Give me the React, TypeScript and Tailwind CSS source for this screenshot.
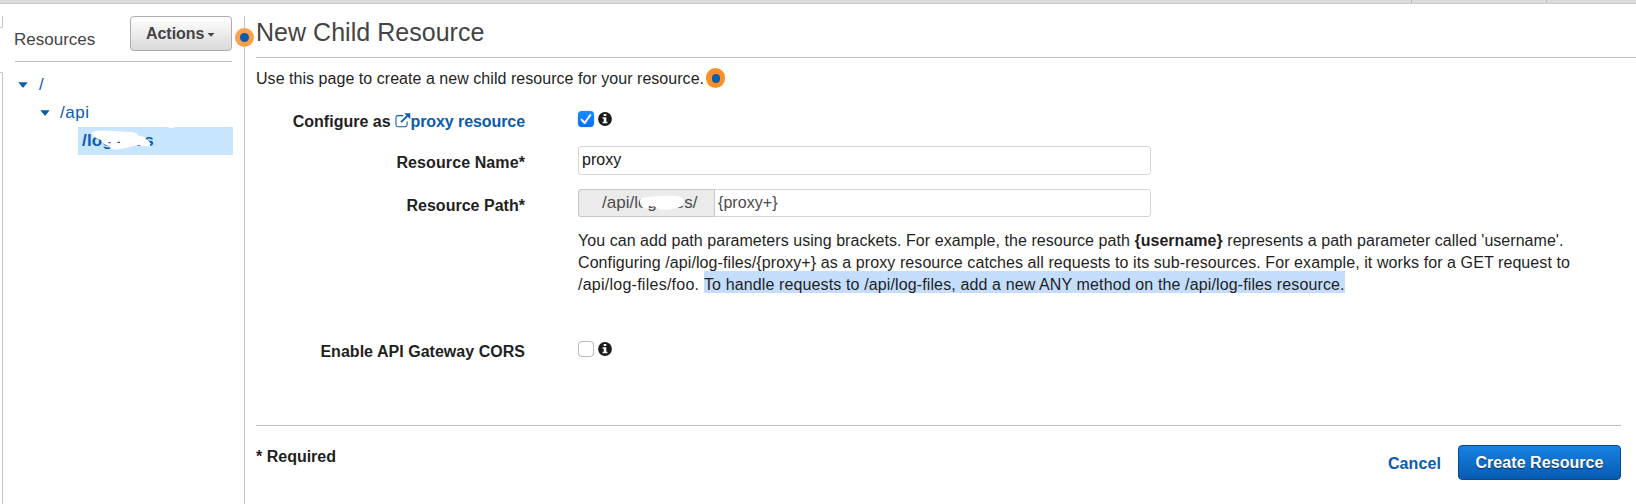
import type { ReactNode } from "react";

function Caret({ className = "" }: { className?: string }) {
  return (
    <svg className={className} width="10" height="6" viewBox="0 0 10 6">
      <path d="M0.3 0.3H9.7L5.6 5.3Q5 6 4.4 5.3Z" fill="#0a5cad" />
    </svg>
  );
}

function InfoIcon() {
  return (
    <svg className="ml-1 mt-[0.5px]" width="14" height="14" viewBox="0 0 14 14">
      <circle cx="7" cy="7" r="6.9" fill="#1c1c1c" />
      <path d="M5.7 2.1h2.6v1.8H5.7zM4.6 5.2h3.7v4.6h1.1v1.5H4.6V9.8h1.2V6.7H4.6z" fill="#fff" />
    </svg>
  );
}

function Checkbox({ checked = false }: { checked?: boolean }) {
  if (!checked) {
    return <span className="h-4 w-4 rounded-[4px] border border-[#bdbdbd] bg-white shadow-[0_0_1px_#0002]" />;
  }
  return (
    <span className="h-4 w-4 rounded-[4px] bg-gradient-to-b from-[#1a8bff] to-[#0670f5] shadow-[0_0_1px_#0670f5]">
      <svg width="16" height="16" viewBox="0 0 16 16">
        <path d="M3.6 8.6 6.7 12 12.3 4" fill="none" stroke="#fff" strokeWidth="2" strokeLinecap="round" strokeLinejoin="round" />
      </svg>
    </span>
  );
}

function Label({ children }: { children: ReactNode }) {
  return <div className="w-[269px] shrink-0 text-right font-bold">{children}</div>;
}

function ExternalIcon() {
  return (
    <svg className="inline-block align-[-1px]" width="15.5" height="15" viewBox="0 0 16 15" fill="none" stroke="#0a5cad">
      <path d="M8.5 2.5H3Q1 2.5 1 4.5V12Q1 14 3 14H10.5Q12.5 14 12.5 12V8.5" strokeWidth="1.1" />
      <path d="M6.3 9.2 13 2.5" strokeWidth="2" />
      <path d="M9.6 0H15.8V6.2Z" fill="#0a5cad" stroke="none" />
    </svg>
  );
}

export default function App() {
  return (
    <div className="flex h-[504px] w-[1636px] flex-col overflow-hidden bg-white font-['Liberation_Sans',Arial,sans-serif] text-[16px] leading-[22px] text-[#1f1f1f]">
      <div className="flex h-1 shrink-0 border-b border-[#cbcbcb] bg-[#dcdcdc]">
        <div className="w-[1412px] border-r border-[#bdbdbd]" />
        <div className="w-[135px] border-r border-[#bdbdbd]" />
      </div>
      <div className="flex min-h-0 flex-1 pt-3">
        <div className="flex w-[3px] shrink-0 flex-col">
          <div className="h-3 rounded-br-[2px] border-r border-b border-[#c4c4c4]" />
          <div className="mt-11 flex-1 rounded-tr-[2px] border-t border-r border-[#c4c4c4]" />
        </div>
        <aside className="flex w-[241px] shrink-0 flex-col pl-3">
          <div className="flex h-[46px] w-[217px] items-start justify-between border-b border-[#bfbfbf]">
            <span className="-ml-px mt-[13px] text-[17px] text-[#444]">Resources</span>
            <button className="flex h-[35px] w-[102px] items-center rounded-[4px] border border-[#adadad] bg-gradient-to-b from-white to-[#dadada] pl-[15px] font-bold text-[#444]">
              <span className="mt-px tracking-[-0.05px]">Actions</span>
              <svg className="ml-[3px] mt-[2px]" width="8" height="4" viewBox="0 0 7 4">
                <path d="M0 0H7L3.5 3.8Z" fill="#444" />
              </svg>
            </button>
          </div>
          <div className="flex flex-col text-[17px] text-[#0a5cad]">
            <div className="mt-[9px] flex h-7 items-center pl-[3px]">
              <Caret />
              <span className="ml-[11px]">/</span>
            </div>
            <div className="flex h-7 items-center pl-[25px]">
              <Caret />
              <span className="ml-[10px] tracking-[0.5px]">/api</span>
            </div>
            <div className="relative ml-[63px] flex h-7 w-[155px] items-center bg-[#c7e5fd] pl-1 font-bold">
              <span className="tracking-[0.2px]">/log-files</span>
              <svg className="absolute left-0 top-0" width="155" height="28" viewBox="0 0 155 28">
                <path d="M14 6Q15 3 25 3.5Q40 4 54 5Q60 6 61 9Q66 9 68 12Q73 14 72 19Q66 20 60 18Q50 21 39 22.5Q32 23 31 19Q25 18 23 13Q14 10 14 6Z" fill="#fff" />
                <path d="M30.5 15h2v1.2h-2zM39.5 14.8h2.5v1.2h-2.5z" fill="#0a5cad" />
                <path d="M90 0Q93 2.5 97 0Z" fill="#fff" />
              </svg>
            </div>
          </div>
        </aside>
        <main className="relative min-w-0 flex-1 border-l border-[#c4c4c4] pl-[11px]">
          <span className="absolute -left-[10.5px] top-[12px] flex h-[19px] w-[19px] items-center justify-center rounded-full bg-[#fd9f4b]">
            <span className="h-[9px] w-[9px] rounded-full bg-[#0a5cad]" />
          </span>
          <div className="h-[42px] border-b border-[#bfbfbf]">
            <h1 className="pt-px text-[25px] leading-[30px] tracking-[0.03px] text-[#444]">New Child Resource</h1>
          </div>
          <div className="mt-[10px] flex h-[22px] items-center">
            <span className="tracking-[0.04px]">Use this page to create a new child resource for your resource.</span>
            <span className="ml-[2px] mt-[-2px] flex h-5 w-[19px] items-center justify-center rounded-full bg-[#fd8f27]">
              <span className="h-[9px] w-2 rounded-full bg-[#0a5cad]" />
            </span>
          </div>
          <div className="mt-[20px] flex h-[36px]">
            <Label>
              <div className="pt-px">
                Configure as <span className="tracking-[-0.08px] text-[#0a5cad]"><ExternalIcon />proxy resource</span>
              </div>
            </Label>
            <div className="ml-[53px] flex items-start pt-px">
              <Checkbox checked />
              <InfoIcon />
            </div>
          </div>
          <div className="flex h-[43px]">
            <Label><div className="pt-[6px] tracking-[0.1px]">Resource Name*</div></Label>
            <div className="ml-[53px] h-[29px] w-[573px] rounded-[3px] border border-[#d5d5d5] pl-[3px] leading-[25px] text-[#161616]">proxy</div>
          </div>
          <div className="flex h-[42px]">
            <Label><div className="pt-[6px] tracking-[0.02px]">Resource Path*</div></Label>
            <div className="ml-[53px] flex h-7 w-[573px] rounded-[3px] border border-[#d5d5d5] leading-[26px] text-[#4b4b4b]">
              <div className="relative -my-px -ml-px flex h-7 w-[137px] items-center rounded-l-[3px] border border-[#c6c6c6] bg-[#ebebeb] pl-[23px] text-[17px]">
                <span>/api/log-files/</span>
                <svg className="absolute left-[60px] top-[5px]" width="48" height="17" viewBox="0 0 48 17">
                  <path d="M1 5Q3 2 10 2Q25 0 38 1Q44 2 45 7Q45 11 38 13Q29 16 20 14Q14 10 10 11Q8 15 4 13Q3 12 3 10Q0 8 1 5Z" fill="#fff" />
                </svg>
              </div>
              <span className="ml-[3px] tracking-[0.05px]">{"{proxy+}"}</span>
            </div>
          </div>
          <div className="ml-[322px] mt-[-1px] whitespace-nowrap">
            <div className="tracking-[0.04px]">
              <span className="tracking-[0.05px]">You can add path parameters using brackets. For example, the resource path </span>
              <b>{"{username}"}</b> represents a path parameter called 'username'.
            </div>
            <div className="tracking-[0.084px]">
              {"Configuring /api/log-files/{proxy+} as a proxy resource catches all requests to its sub-resources. For example, it works for a GET request to"}
            </div>
            <div className="tracking-[0.125px]">
              <span className="tracking-[0.25px]">/api/log-files/foo. </span>
              <span className="bg-[#c4ddfc] pt-[5px]">To handle requests to /api/log-files, add a new ANY method on the /api/log-files resource.</span>
            </div>
          </div>
          <div className="mt-[44px] flex h-[85px]">
            <Label><div className="pt-px tracking-[0.03px]">Enable API Gateway CORS</div></Label>
            <div className="ml-[53px] flex items-start pt-px">
              <Checkbox />
              <InfoIcon />
            </div>
          </div>
          <div className="mr-[15px] flex h-[79px] items-start justify-between border-t border-[#bfbfbf] font-bold">
            <span className="pt-[20px]">* Required</span>
            <div className="flex items-center pt-[19px]">
              <span className="mr-[17px] mt-[2px] tracking-[0.1px] text-[#0a5cad]">Cancel</span>
              <button className="h-[35px] w-[163px] rounded-[4px] border border-[#07478a] bg-gradient-to-b from-[#1782e4] to-[#075bb0] pt-px tracking-[0.06px] text-white [text-shadow:0_1px_1px_#0009]">
                Create Resource
              </button>
            </div>
          </div>
        </main>
      </div>
    </div>
  );
}
